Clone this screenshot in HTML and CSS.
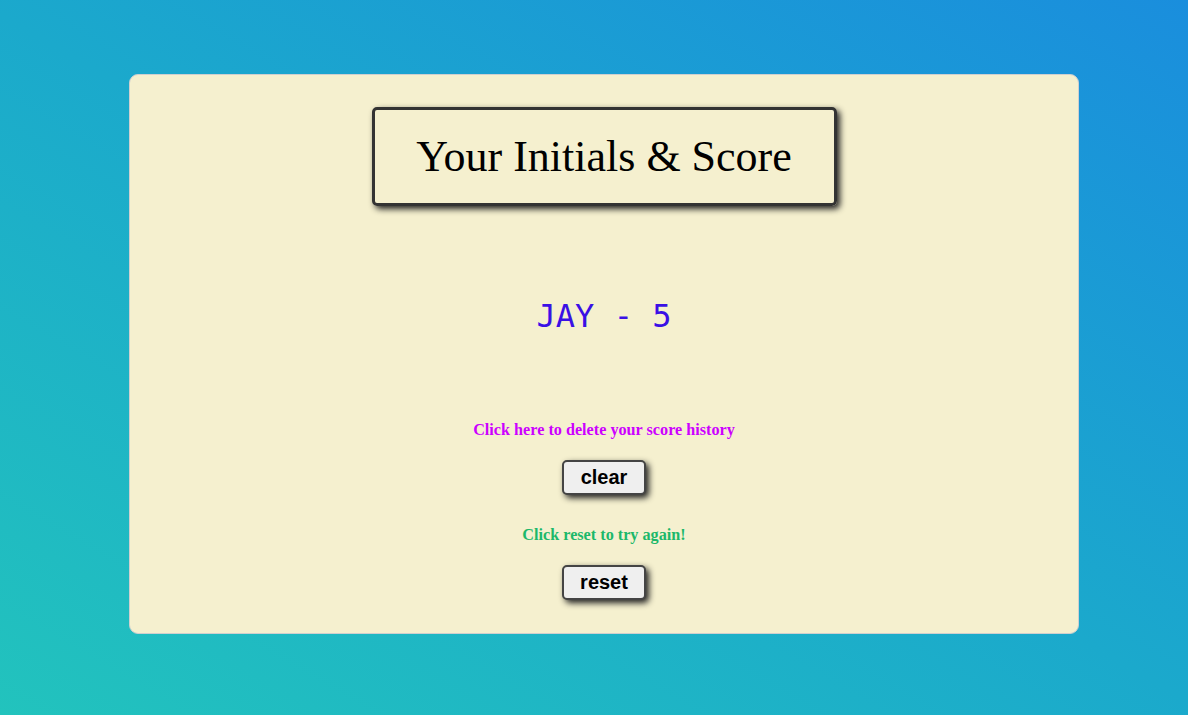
FILE: index.html
```html
<!DOCTYPE html>
<html>
<head>
<meta charset="utf-8">
<link rel="stylesheet" href="styles.css">
</head>
<body>
<div class="card">
  <h1 class="title">Your Initials &amp; Score</h1>
  <div class="score">JAY - 5</div>
  <p class="note note-clear">Click here to delete your score history</p>
  <button class="btn">clear</button>
  <p class="note note-reset">Click reset to try again!</p>
  <button class="btn">reset</button>
</div>
</body>
</html>
```
FILE: styles.css
```css
html, body {
  margin: 0;
  padding: 0;
}
body {
  width: 1188px;
  height: 715px;
  overflow: hidden;
  background: linear-gradient(30deg, #22c3bd 0%, #1ba9cc 50%, #1a8edd 100%);
  font-family: "Liberation Serif", serif;
}
.card {
  box-sizing: border-box;
  margin: 74px 0 0 129px;
  width: 950px;
  height: 560px;
  background: #f5f0cf;
  border: 1px solid #cfcfcf;
  border-radius: 9px;
  display: flex;
  flex-direction: column;
  align-items: center;
}
.title {
  box-sizing: border-box;
  margin: 32px 0 0 0;
  width: 465px;
  height: 99px;
  border: 3px solid #333;
  border-radius: 5px;
  box-shadow: 3px 3px 6px #222;
  font-weight: normal;
  font-size: 44px;
  display: flex;
  align-items: center;
  justify-content: center;
  color: #000;
}
.score {
  margin-top: 90px;
  font-family: "DejaVu Sans Mono", monospace;
  font-size: 32px;
  color: #3a10e5;
  line-height: 40px;
}
.note {
  margin: 0;
  font-weight: bold;
  font-size: 16.2px;
  line-height: 20px;
}
.note-clear {
  margin-top: 84px;
  color: #cc00ff;
}
.note-reset {
  margin-top: 30px;
  color: #1cb86a;
}
.btn {
  box-sizing: border-box;
  width: 84px;
  height: 35px;
  margin-top: 20px;
  background: #efefef;
  border: 2px solid #444;
  border-radius: 5px;
  box-shadow: 3px 3px 6px #222;
  font-family: "Liberation Sans", Arial, sans-serif;
  font-weight: bold;
  font-size: 20px;
  color: #000;
  padding: 0;
}
```
